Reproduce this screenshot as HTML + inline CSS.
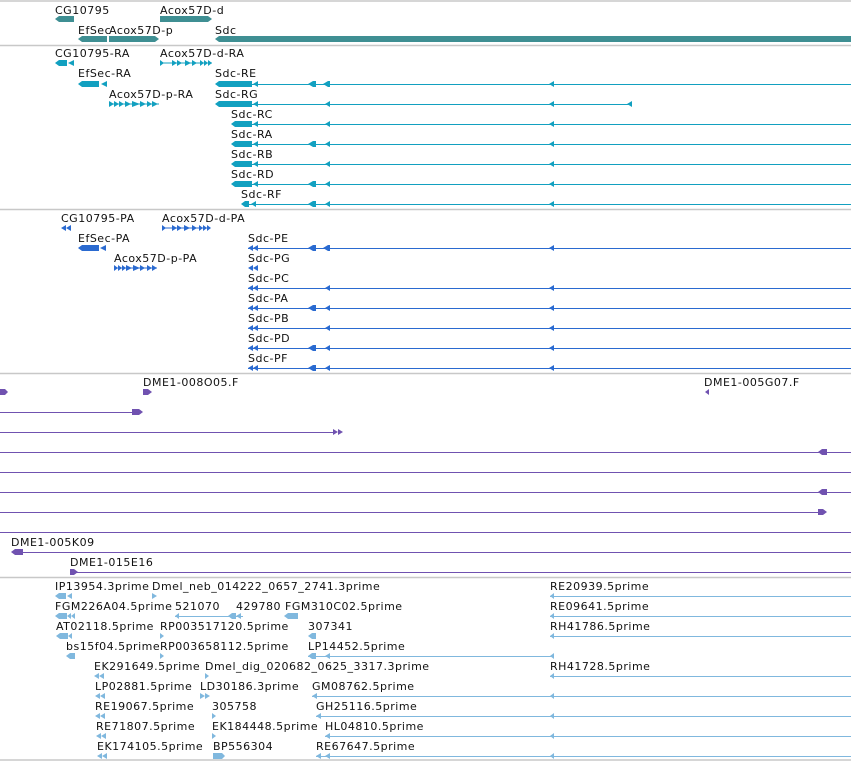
<!DOCTYPE html>
<html><head><meta charset="utf-8"><style>
html,body{margin:0;padding:0;background:#fff;width:851px;height:761px;overflow:hidden}
svg text{font-family:"DejaVu Sans","Liberation Sans",sans-serif;font-size:11px;letter-spacing:0.5px;fill:#111}
</style></head><body>
<svg width="851" height="761" xmlns="http://www.w3.org/2000/svg">
<g stroke="#c8c8c8" stroke-width="1.5">
<line x1="0" y1="1" x2="851" y2="1"/><line x1="0" y1="45.5" x2="851" y2="45.5"/>
<line x1="0" y1="209.5" x2="851" y2="209.5"/><line x1="0" y1="373.5" x2="851" y2="373.5"/>
<line x1="0" y1="577.5" x2="851" y2="577.5"/><line x1="0" y1="760" x2="851" y2="760"/>
</g>
<g fill="#3f8f93">
<polygon points="55,19 59,16 74,16 74,22 59,22"/>
<polygon points="160,16 208,16 212,19 208,22 160,22"/>
<polygon points="78,39 82,36 107,36 107,42 82,42"/>
<polygon points="109,36 155,36 159,39 155,42 109,42"/>
<polygon points="215,39 219,36 851,36 851,42 219,42"/>
</g>
<text x="55" y="14">CG10795</text><text x="160" y="14">Acox57D-d</text>
<text x="78" y="34">EfSec</text><text x="109" y="34">Acox57D-p</text><text x="215" y="34">Sdc</text>
<g fill="#12a0c0" stroke="#12a0c0">
<g stroke="none">
<polygon points="55,63 59,60 67,60 67,66 59,66"/><polygon points="68,63 74,60 74,66"/>
<rect x="160" y="62.5" width="52" height="1"/>
<polygon points="160,60 164,63 160,66"/><polygon points="172,60 177,63 172,66"/><polygon points="177,60 182,63 177,66"/><polygon points="185,60 191,63 185,66"/><polygon points="192,60 197,63 192,66"/><polygon points="200,60 204,63 200,66"/><polygon points="204,60 208,63 204,66"/><polygon points="208,60 212,63 208,66"/>
<polygon points="78,84 82,81 99,81 99,87 82,87"/><polygon points="101,84 107,81 107,87"/>
<polygon points="109,101 114,104 109,107"/><polygon points="114,101 119,104 114,107"/><polygon points="119,101 124,104 119,107"/><polygon points="125,101 131,104 125,107"/><polygon points="132,101 140,104 132,107"/><polygon points="140,101 146,104 140,107"/><polygon points="147,101 152,104 147,107"/><polygon points="152,101 158,104 152,107"/><rect x="109" y="103.5" width="50" height="1"/>
</g>
<g stroke-width="1">
<line x1="252" y1="84.5" x2="851" y2="84.5"/><line x1="252" y1="104.5" x2="630" y2="104.5"/>
<line x1="252" y1="124.5" x2="851" y2="124.5"/><line x1="252" y1="144.5" x2="851" y2="144.5"/>
<line x1="252" y1="164.5" x2="851" y2="164.5"/><line x1="252" y1="184.5" x2="851" y2="184.5"/>
<line x1="249" y1="204.5" x2="851" y2="204.5"/>
</g>
<g stroke="none">
<polygon points="215,84 219,81 252,81 252,87 219,87"/><polygon points="253,84 258,81 258,87"/>
<polygon points="308,84 313,81 316,81 316,87 313,87"/><polygon points="323,84 328,81 330,81 330,87 328,87"/><polygon points="549,84 554,81 554,87"/>
<polygon points="215,104 219,101 252,101 252,107 219,107"/><polygon points="253,104 258,101 258,107"/>
<polygon points="325,104 330,101 330,107"/><polygon points="549,104 554,101 554,107"/><polygon points="627,104 632,101 632,107"/>
<polygon points="231,124 235,121 252,121 252,127 235,127"/><polygon points="253,124 258,121 258,127"/><polygon points="325,124 330,121 330,127"/><polygon points="549,124 554,121 554,127"/>
<polygon points="231,144 235,141 252,141 252,147 235,147"/><polygon points="253,144 258,141 258,147"/><polygon points="308,144 313,141 316,141 316,147 313,147"/><polygon points="325,144 330,141 330,147"/><polygon points="549,144 554,141 554,147"/>
<polygon points="231,164 235,161 252,161 252,167 235,167"/><polygon points="253,164 258,161 258,167"/><polygon points="325,164 330,161 330,167"/><polygon points="549,164 554,161 554,167"/>
<polygon points="231,184 235,181 252,181 252,187 235,187"/><polygon points="253,184 258,181 258,187"/><polygon points="308,184 313,181 316,181 316,187 313,187"/><polygon points="325,184 330,181 330,187"/><polygon points="549,184 554,181 554,187"/>
<polygon points="241,204 245,201 249,201 249,207 245,207"/><polygon points="251,204 256,201 256,207"/><polygon points="308,204 313,201 316,201 316,207 313,207"/><polygon points="325,204 330,201 330,207"/><polygon points="549,204 554,201 554,207"/>
</g></g>
<text x="55" y="57">CG10795-RA</text><text x="160" y="57">Acox57D-d-RA</text>
<text x="78" y="77">EfSec-RA</text><text x="215" y="77">Sdc-RE</text>
<text x="109" y="98">Acox57D-p-RA</text><text x="215" y="98">Sdc-RG</text>
<text x="231" y="118">Sdc-RC</text><text x="231" y="138">Sdc-RA</text><text x="231" y="158">Sdc-RB</text><text x="231" y="178">Sdc-RD</text><text x="241" y="198">Sdc-RF</text>
<g fill="#2a6ad0" stroke="#2a6ad0">
<g stroke="none">
<polygon points="61,228 66,225 66,231"/><polygon points="66,228 71,225 71,231"/>
<rect x="162" y="227.5" width="48" height="1"/>
<polygon points="162,225 166,228 162,231"/><polygon points="172,225 177,228 172,231"/><polygon points="177,225 182,228 177,231"/><polygon points="184,225 190,228 184,231"/><polygon points="192,225 197,228 192,231"/><polygon points="199,225 203,228 199,231"/><polygon points="203,225 207,228 203,231"/><polygon points="207,225 211,228 207,231"/>
<polygon points="78,248 82,245 99,245 99,251 82,251"/><polygon points="100,248 106,245 106,251"/>
<polygon points="114,265 118,268 114,271"/><polygon points="118,265 122,268 118,271"/><polygon points="122,265 126,268 122,271"/><polygon points="126,265 132,268 126,271"/><polygon points="133,265 140,268 133,271"/><polygon points="140,265 145,268 140,271"/><polygon points="147,265 152,268 147,271"/><polygon points="152,265 157,268 152,271"/><rect x="114" y="267.5" width="43" height="1"/>
</g>
<g stroke-width="1">
<line x1="248" y1="248.5" x2="851" y2="248.5"/><line x1="248" y1="288.5" x2="851" y2="288.5"/><line x1="248" y1="308.5" x2="851" y2="308.5"/><line x1="248" y1="328.5" x2="851" y2="328.5"/><line x1="248" y1="348.5" x2="851" y2="348.5"/><line x1="248" y1="368.5" x2="851" y2="368.5"/>
</g>
<g stroke="none">
<polygon points="248,248 253,245 253,251"/><polygon points="253,248 258,245 258,251"/><polygon points="308,248 313,245 316,245 316,251 313,251"/><polygon points="323,248 328,245 330,245 330,251 328,251"/><polygon points="549,248 554,245 554,251"/>
<polygon points="248,268 253,265 253,271"/><polygon points="253,268 258,265 258,271"/>
<polygon points="248,288 253,285 253,291"/><polygon points="253,288 258,285 258,291"/><polygon points="325,288 330,285 330,291"/><polygon points="549,288 554,285 554,291"/>
<polygon points="248,308 253,305 253,311"/><polygon points="253,308 258,305 258,311"/><polygon points="308,308 313,305 316,305 316,311 313,311"/><polygon points="325,308 330,305 330,311"/><polygon points="549,308 554,305 554,311"/>
<polygon points="248,328 253,325 253,331"/><polygon points="253,328 258,325 258,331"/><polygon points="325,328 330,325 330,331"/><polygon points="549,328 554,325 554,331"/>
<polygon points="248,348 253,345 253,351"/><polygon points="253,348 258,345 258,351"/><polygon points="308,348 313,345 316,345 316,351 313,351"/><polygon points="325,348 330,345 330,351"/><polygon points="549,348 554,345 554,351"/>
<polygon points="248,368 253,365 253,371"/><polygon points="253,368 258,365 258,371"/><polygon points="308,368 313,365 316,365 316,371 313,371"/><polygon points="325,368 330,365 330,371"/><polygon points="549,368 554,365 554,371"/>
</g></g>
<text x="61" y="222">CG10795-PA</text><text x="162" y="222">Acox57D-d-PA</text>
<text x="78" y="242">EfSec-PA</text><text x="248" y="242">Sdc-PE</text>
<text x="114" y="262">Acox57D-p-PA</text><text x="248" y="262">Sdc-PG</text>
<text x="248" y="282">Sdc-PC</text><text x="248" y="302">Sdc-PA</text><text x="248" y="322">Sdc-PB</text><text x="248" y="342">Sdc-PD</text><text x="248" y="362">Sdc-PF</text>
<g fill="#7052b0" stroke="#7052b0">
<g stroke-width="1">
<line x1="0" y1="412.5" x2="134" y2="412.5"/><line x1="0" y1="432.5" x2="334" y2="432.5"/>
<line x1="0" y1="452.5" x2="851" y2="452.5"/><line x1="0" y1="472.5" x2="851" y2="472.5"/>
<line x1="0" y1="492.5" x2="851" y2="492.5"/><line x1="0" y1="512.5" x2="820" y2="512.5"/>
<line x1="0" y1="532.5" x2="851" y2="532.5"/><line x1="20" y1="552.5" x2="851" y2="552.5"/>
<line x1="76" y1="572.5" x2="851" y2="572.5"/>
</g>
<g stroke="none">
<polygon points="0,389 5,389 8,392 5,395 0,395"/><polygon points="143,389 148,389 152,392 148,395 143,395"/><polygon points="705,392 709,389 709,395"/>
<polygon points="132,409 139,409 143,412 139,415 132,415"/>
<polygon points="333,429 338,432 333,435"/><polygon points="338,429 343,432 338,435"/>
<polygon points="818,452 822,449 827,449 827,455 822,455"/>
<polygon points="818,492 822,489 827,489 827,495 822,495"/>
<polygon points="818,509 823,509 827,512 823,515 818,515"/>
<polygon points="11,552 15,549 23,549 23,555 15,555"/>
<polygon points="70,569 74,569 78,572 74,575 70,575"/>
</g></g>
<text x="143" y="386">DME1-008O05.F</text><text x="704" y="386">DME1-005G07.F</text>
<text x="11" y="546">DME1-005K09</text><text x="70" y="566">DME1-015E16</text>
<g fill="#80b8de" stroke="#80b8de">
<g stroke-width="1">
<line x1="550" y1="596.5" x2="851" y2="596.5"/><line x1="550" y1="616.5" x2="851" y2="616.5"/><line x1="550" y1="636.5" x2="851" y2="636.5"/>
<line x1="175" y1="616.5" x2="243" y2="616.5"/><line x1="308" y1="656.5" x2="554" y2="656.5"/>
<line x1="550" y1="676.5" x2="851" y2="676.5"/><line x1="312" y1="696.5" x2="851" y2="696.5"/>
<line x1="316" y1="716.5" x2="851" y2="716.5"/><line x1="325" y1="736.5" x2="851" y2="736.5"/>
<line x1="316" y1="756.5" x2="851" y2="756.5"/>
</g>
<g stroke="none">
<polygon points="55,596 59,593 66,593 66,599 59,599"/><polygon points="67,596 72,593 72,599"/><polygon points="152,593 157,596 152,599"/>
<polygon points="550,596 554,593 554,599"/><polygon points="550,616 554,613 554,619"/><polygon points="550,636 554,633 554,639"/><polygon points="550,676 554,673 554,679"/>
<polygon points="55,616 59,613 67,613 67,619 59,619"/><polygon points="67,616 71,613 71,619"/><polygon points="71,616 75,613 75,619"/>
<polygon points="175,616 179,613 179,619"/><polygon points="228,616 232,613 236,613 236,619 232,619"/><polygon points="236,616 241,613 241,619"/>
<polygon points="284,616 288,613 298,613 298,619 288,619"/>
<polygon points="56,636 60,633 68,633 68,639 60,639"/><polygon points="68,636 72,633 72,639"/><polygon points="160,633 164,636 160,639"/><polygon points="308,636 312,633 316,633 316,639 312,639"/>
<polygon points="66,656 70,653 75,653 75,659 70,659"/><polygon points="160,653 164,656 160,659"/><polygon points="308,656 312,653 316,653 316,659 312,659"/><polygon points="325,656 330,653 330,659"/><polygon points="550,656 554,653 554,659"/>
<polygon points="94,676 99,673 99,679"/><polygon points="99,676 104,673 104,679"/><polygon points="205,673 209,676 205,679"/>
<polygon points="95,696 100,693 100,699"/><polygon points="100,696 105,693 105,699"/><polygon points="200,693 205,696 200,699"/><polygon points="205,693 210,696 205,699"/><polygon points="312,696 317,693 317,699"/><polygon points="550,696 554,693 554,699"/>
<polygon points="95,716 100,713 100,719"/><polygon points="100,716 105,713 105,719"/><polygon points="212,713 216,716 212,719"/><polygon points="316,716 321,713 321,719"/><polygon points="550,716 554,713 554,719"/>
<polygon points="96,736 101,733 101,739"/><polygon points="101,736 106,733 106,739"/><polygon points="212,733 216,736 212,739"/><polygon points="325,736 330,733 330,739"/><polygon points="550,736 554,733 554,739"/>
<polygon points="97,756 102,753 102,759"/><polygon points="102,756 107,753 107,759"/><polygon points="213,753 222,753 225,756 222,759 213,759"/><polygon points="316,756 321,753 321,759"/><polygon points="325,756 330,753 330,759"/><polygon points="550,756 554,753 554,759"/>
</g></g>
<text x="55" y="590">IP13954.3prime</text><text x="152" y="590">Dmel_neb_014222_0657_2741.3prime</text><text x="550" y="590">RE20939.5prime</text>
<text x="55" y="610">FGM226A04.5prime</text><text x="175" y="610">521070</text><text x="236" y="610">429780</text><text x="285" y="610">FGM310C02.5prime</text><text x="550" y="610">RE09641.5prime</text>
<text x="56" y="630">AT02118.5prime</text><text x="160" y="630">RP003517120.5prime</text><text x="308" y="630">307341</text><text x="550" y="630">RH41786.5prime</text>
<text x="66" y="650">bs15f04.5prime</text><text x="160" y="650">RP003658112.5prime</text><text x="308" y="650">LP14452.5prime</text>
<text x="94" y="670">EK291649.5prime</text><text x="205" y="670">Dmel_dig_020682_0625_3317.3prime</text><text x="550" y="670">RH41728.5prime</text>
<text x="95" y="690">LP02881.5prime</text><text x="200" y="690">LD30186.3prime</text><text x="312" y="690">GM08762.5prime</text>
<text x="95" y="710">RE19067.5prime</text><text x="212" y="710">305758</text><text x="316" y="710">GH25116.5prime</text>
<text x="96" y="730">RE71807.5prime</text><text x="212" y="730">EK184448.5prime</text><text x="325" y="730">HL04810.5prime</text>
<text x="97" y="750">EK174105.5prime</text><text x="213" y="750">BP556304</text><text x="316" y="750">RE67647.5prime</text>
</svg>
</body></html>
